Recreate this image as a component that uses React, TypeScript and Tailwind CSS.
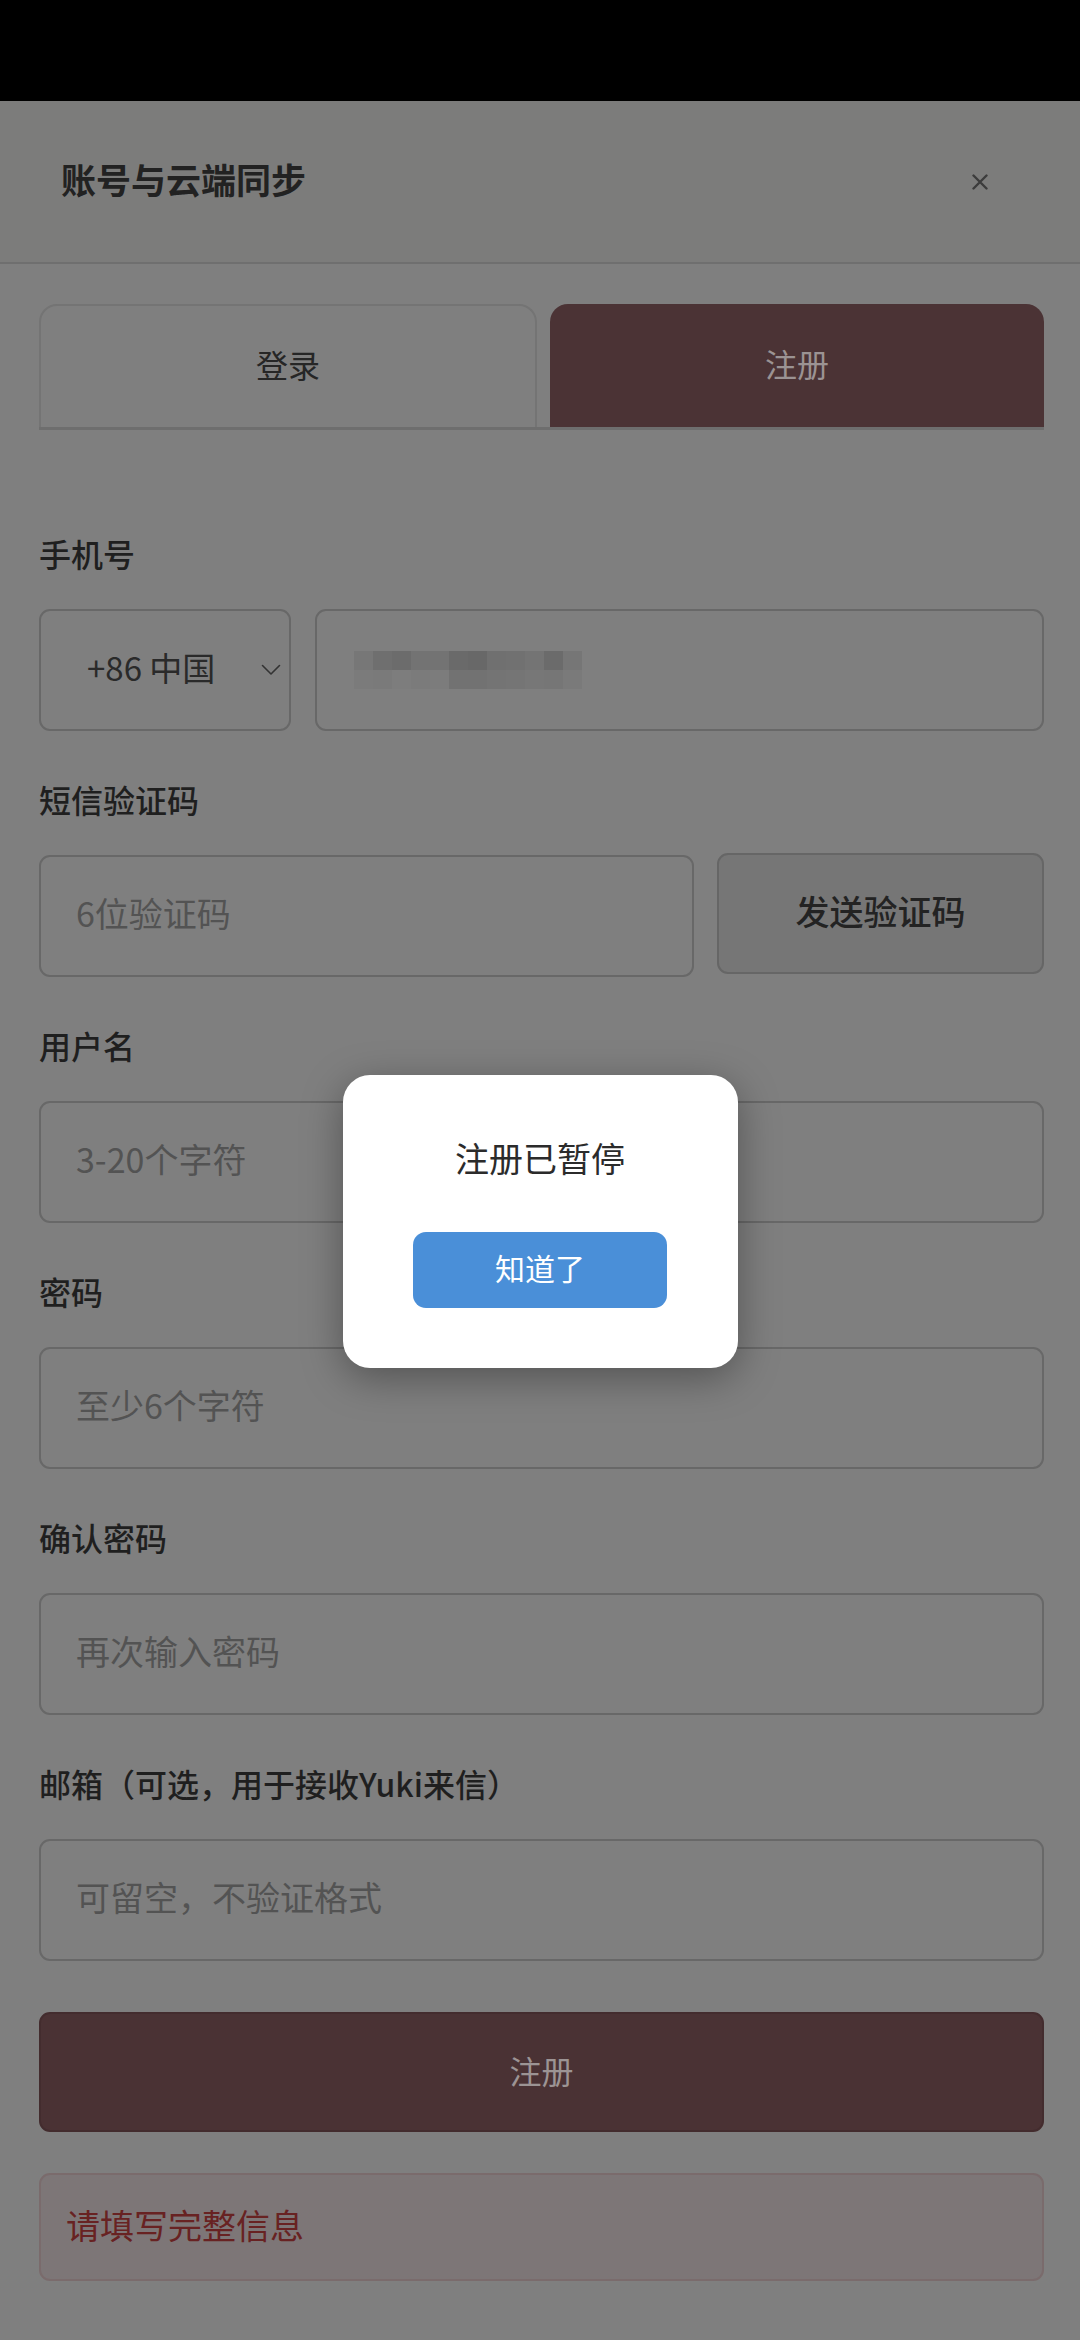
// dimmed page colours as they appear under the modal scrim
const FONT = "font-['Noto_Sans_CJK_SC','Noto_Sans',sans-serif]";

const mosaic = [
  ["#777777", "#6f6f6f", "#6c6c6c", "#737373", "#737373", "#6a6a6a", "#686868", "#707070", "#717171", "#747474", "#6b6b6b", "#767676"],
  ["#7b7b7b", "#7a7a7a", "#7d7d7d", "#7b7b7b", "#7c7c7c", "#727272", "#727272", "#747474", "#757575", "#777777", "#767676", "#7a7a7a"],
];

interface FieldProps {
  label: string;
  placeholder: string;
}

function Label({ text }: { text: string }) {
  return <div className="h-[40px] leading-[40px] text-[32px] font-medium text-[#1f1f1f] mb-[36px]">{text}</div>;
}

function Field({ label, placeholder }: FieldProps) {
  return (
    <div className="mt-[48px]">
      <Label text={label} />
      <div className="h-[122px] rounded-[11px] border-2 border-[#686868] flex items-center pl-[35px] pb-[7px] text-[34px] text-[#535353]">
        {placeholder}
      </div>
    </div>
  );
}

export default function App() {
  return (
    <div className={`relative w-[1080px] min-h-[2340px] bg-[#7f7f7f] ${FONT}`}>
      {/* status bar */}
      <div className="h-[101px] bg-black" />

      {/* header */}
      <div className="h-[163px] bg-[#7c7c7b] border-b-2 border-[#6f6f6f] flex items-center justify-between pl-[61px] pr-[92px]">
        <h1 className="text-[35px] font-bold text-[#222222] pb-[5px]">账号与云端同步</h1>
        <svg width="16" height="16" viewBox="0 0 16 16" className="text-[#3c3c3c]">
          <path d="M1.5 1.5 L14.5 14.5 M14.5 1.5 L1.5 14.5" stroke="currentColor" strokeWidth="2.4" strokeLinecap="round" />
        </svg>
      </div>

      <div className="pl-[39px] pr-[36px] pb-[60px]">
        {/* tabs */}
        <div className="mt-[40px] flex gap-[13px] border-b-[3px] border-[#6e6e6e]">
          <div className="flex-1 h-[123px] rounded-t-[18px] border-2 border-b-0 border-[#747474] flex items-center justify-center pb-[5px] text-[32px] text-[#262626]">
            登录
          </div>
          <div className="flex-1 h-[123px] rounded-t-[18px] bg-[#4b3335] flex items-center justify-center pb-[5px] text-[32px] text-[#9b9393]">
            注册
          </div>
        </div>

        {/* phone */}
        <div className="mt-[103px]">
          <Label text="手机号" />
          <div className="flex gap-[24px] h-[122px]">
            <div className="w-[252px] rounded-[11px] border-2 border-[#686868] flex items-center pl-[46px] pr-[8px] text-[33px] text-[#2a2a2a]">
              <span className="flex-1 pb-[5px]">+86 中国</span>
              <svg width="20" height="12" viewBox="0 0 20 12" className="text-[#333333]">
                <path d="M1.5 1.5 L10 10 L18.5 1.5" fill="none" stroke="currentColor" strokeWidth="1.6" strokeLinecap="round" strokeLinejoin="round" />
              </svg>
            </div>
            <div className="flex-1 rounded-[11px] border-2 border-[#686868] flex items-center pl-[37px]">
              <div className="flex flex-col">
                {mosaic.map((row, r) => (
                  <div key={r} className="flex">
                    {row.map((c, i) => (
                      <div key={i} className="w-[19px] h-[19px]" style={{ backgroundColor: c }} />
                    ))}
                  </div>
                ))}
              </div>
            </div>
          </div>
        </div>

        {/* sms code */}
        <div className="mt-[48px]">
          <Label text="短信验证码" />
          <div className="flex gap-[23px] h-[122px]">
            <div className="flex-1 rounded-[11px] border-2 border-[#686868] flex items-center pl-[35px] pb-[7px] text-[34px] text-[#535353]">
              6位验证码
            </div>
            <div className="w-[327px] -mt-[2px] h-[121px] rounded-[11px] border-2 border-[#666666] bg-[#767676] flex items-center justify-center pb-[6px] text-[34px] font-medium text-[#232323]">
              发送验证码
            </div>
          </div>
        </div>

        <Field label="用户名" placeholder="3-20个字符" />
        <Field label="密码" placeholder="至少6个字符" />
        <Field label="确认密码" placeholder="再次输入密码" />
        <Field label="邮箱（可选，用于接收Yuki来信）" placeholder="可留空，不验证格式" />

        <div className="mt-[51px] h-[120px] rounded-[11px] bg-[#4a3234] border-2 border-[#432c2e] flex items-center justify-center pb-[5px] text-[32px] text-[#9c9494]">
          注册
        </div>

        <div className="mt-[41px] h-[108px] rounded-[11px] bg-[#7d7677] border-2 border-[#7a6b6c] flex items-center pl-[25px] pb-[6px] text-[34px] text-[#682222]">
          请填写完整信息
        </div>
      </div>

      {/* modal */}
      <div className="absolute inset-x-0 top-[101px] bottom-0 flex items-center justify-center">
        <div className="w-[395px] h-[293px] bg-white rounded-[27px] shadow-[0_10px_40px_rgba(0,0,0,0.35)] flex flex-col items-center pt-[61px]">
          <div className="h-[44px] leading-[44px] text-[34px] text-[#2b2b2b]">注册已暂停</div>
          <button className="mt-[52px] w-[254px] h-[76px] rounded-[13px] bg-[#4a8fd8] text-white text-[30px] flex items-center justify-center pb-[4px]">
            知道了
          </button>
        </div>
      </div>
    </div>
  );
}
